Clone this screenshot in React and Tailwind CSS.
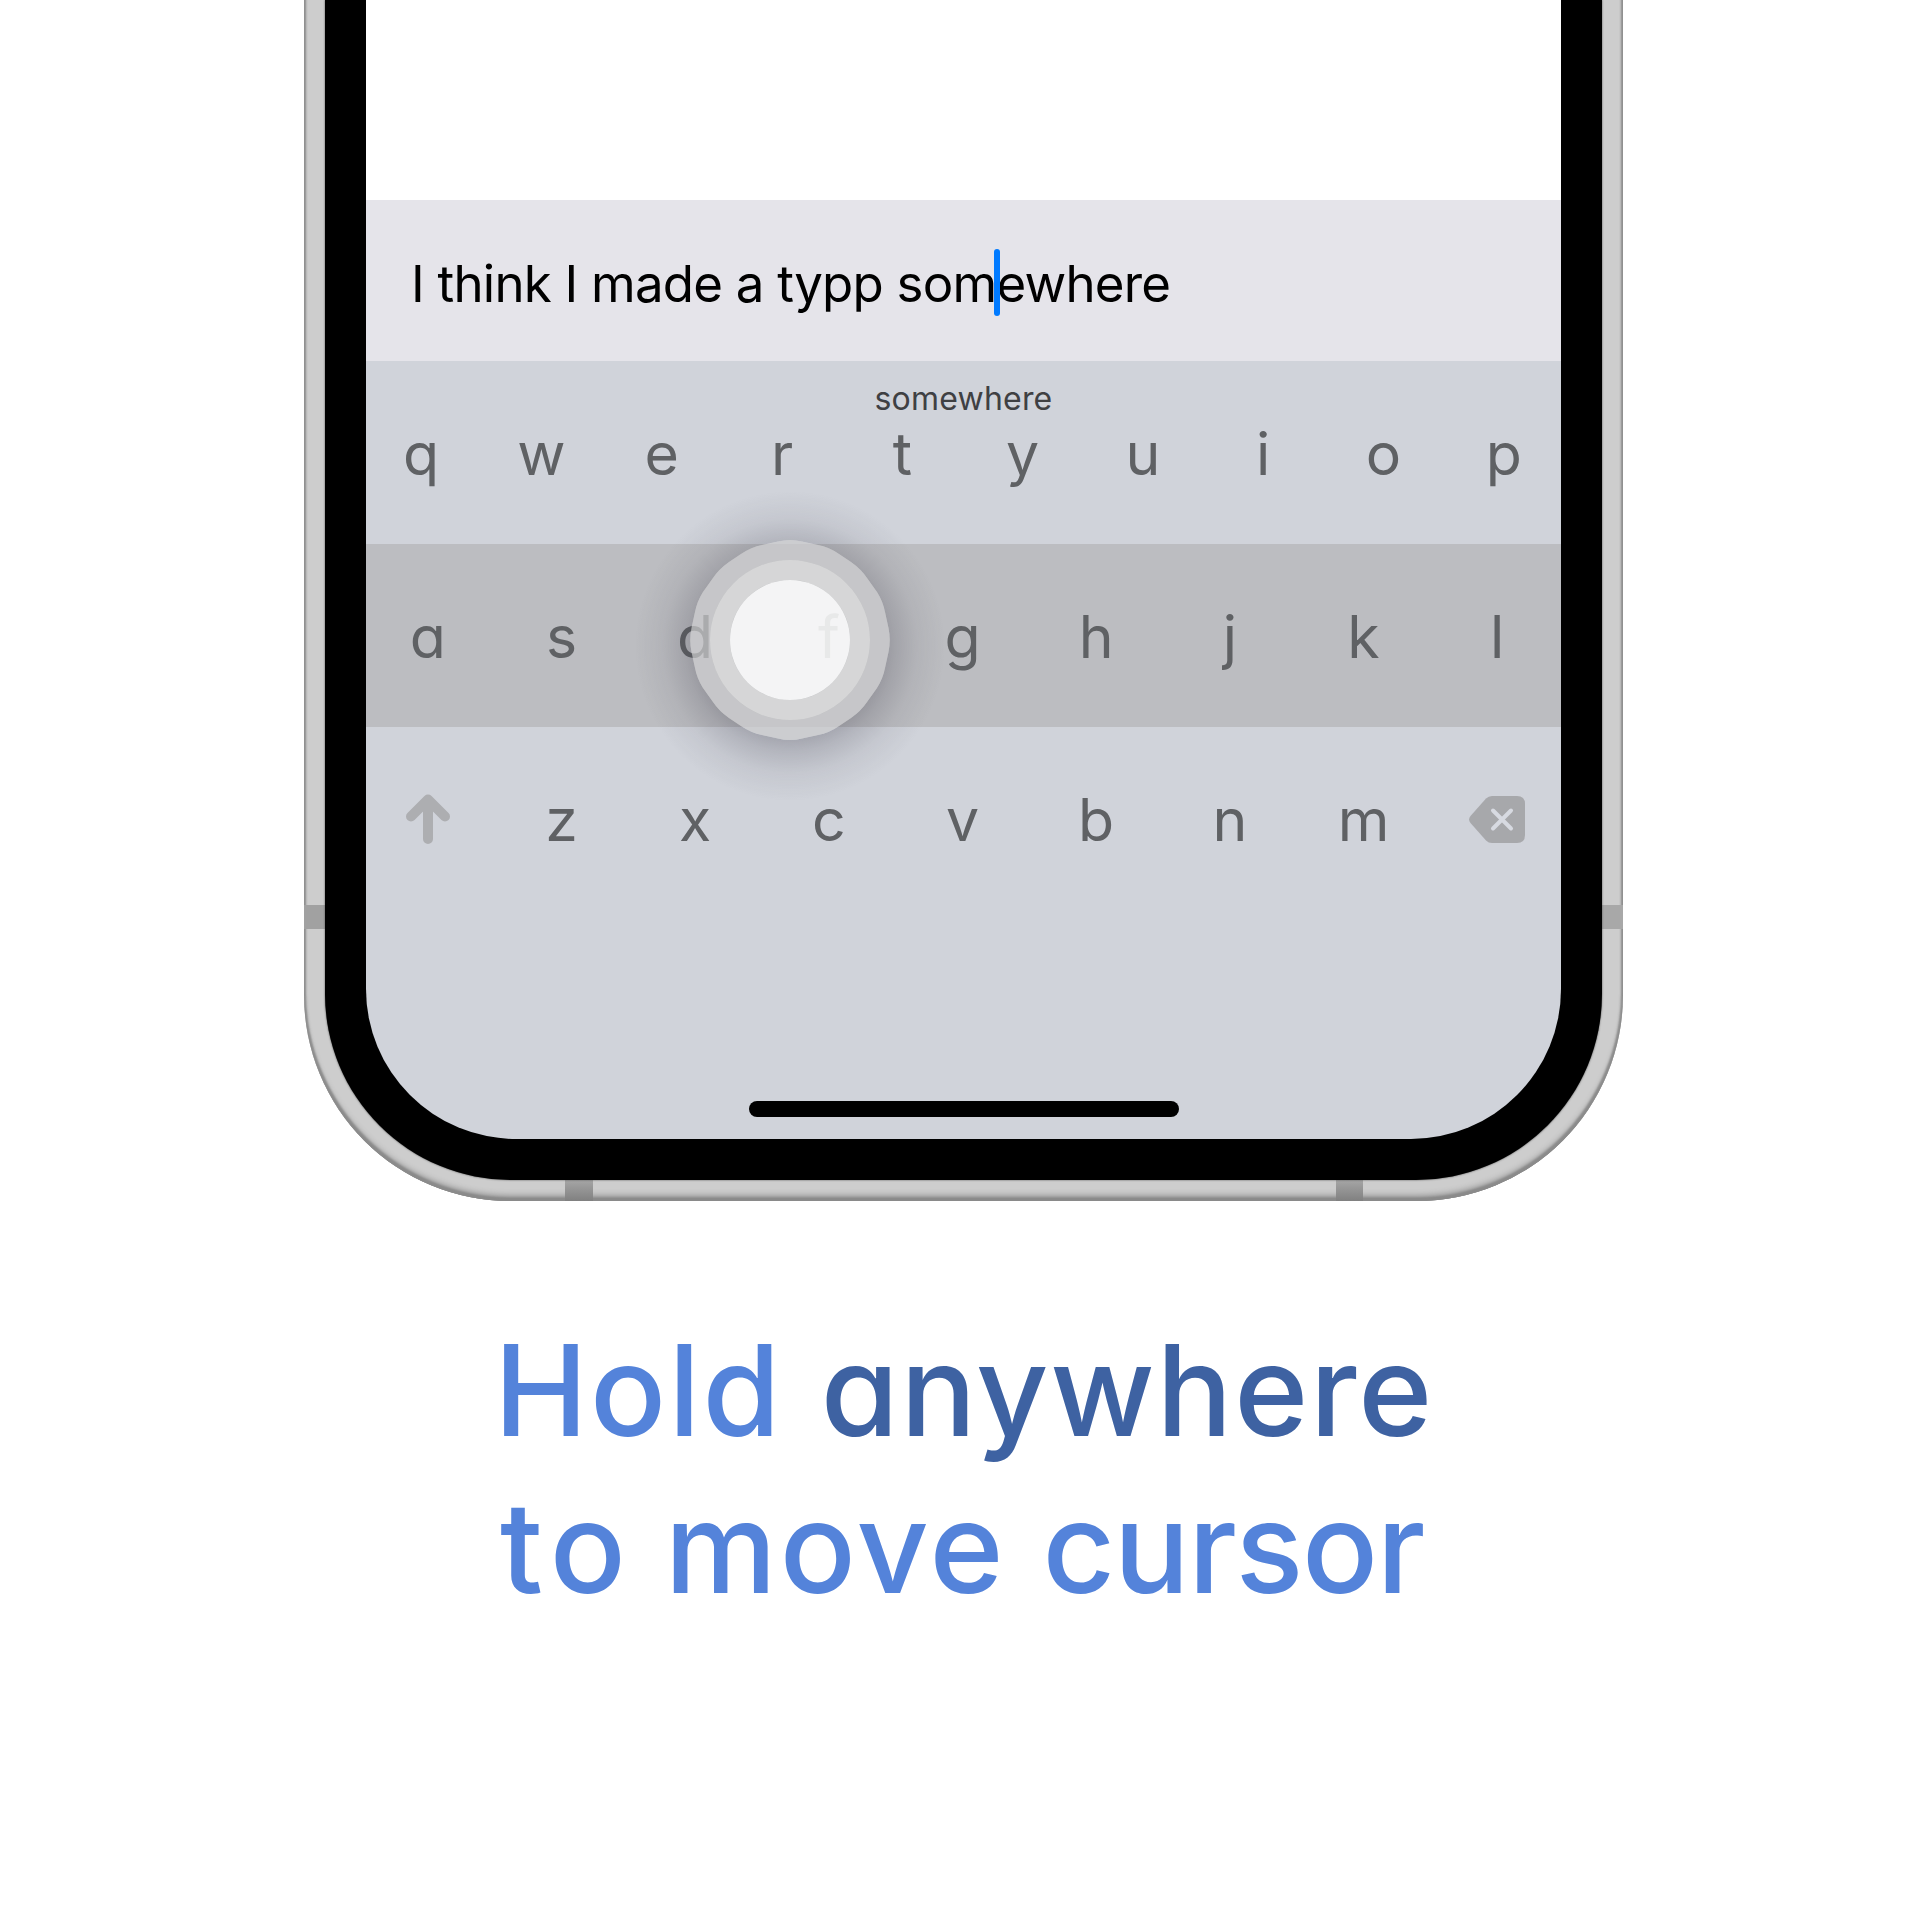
const ROW_TOP = ["q", "w", "e", "r", "t", "y", "u", "i", "o", "p"];
const ROW_HOME = ["a", "s", "d", "f", "g", "h", "j", "k", "l"];
const ROW_BOTTOM = ["z", "x", "c", "v", "b", "n", "m"];
const TOUCH_EDGE =
  "M88 1.500Q100 -1.500 112 1.500L128 5Q139 7 149 14L161 22Q171 29 177 38L187 52Q193 61.500 195 72L198.500 88Q201 100 198.500 112L195 128Q193 138.500 187 148L177 162Q171 171 161 178L149 186Q139 193 128 195L112 198.500Q100 201.500 88 198.500L72 195Q61.500 193 51 186L39 178Q29 171 23 162L13 148Q7 138.500 5 128L1.500 112Q-1 100 1.500 88L5 72Q7 61.500 13 52L23 38Q29 29 39 22L51 14Q61.500 7 72 5Z";

function Key({ children }) {
  return (
    <span className="flex h-full items-center justify-center pt-[2px] text-[59px] leading-none text-[#5f6164]">
      {children}
    </span>
  );
}

function ShiftIcon() {
  return (
    <svg viewBox="0 0 44 50" className="h-[50px] w-[44px]" fill="none" stroke="#adaeb1" strokeWidth="10" strokeLinecap="round" strokeLinejoin="round">
      <path d="M22 45V6M5 22.500L22 5.500L39 22.500" />
    </svg>
  );
}

function BackspaceIcon() {
  return (
    <svg viewBox="0 0 56 47" className="h-[47px] w-[56px]" fill="none">
      <path d="M23 0H48Q56 0 56 8V39Q56 47 48 47H23Q19.500 47 17 44.500L1.500 27Q-1.300 23.500 1.500 20L17 2.500Q19.500 0 23 0Z" fill="#a7a8ab" />
      <path d="M24 14.500L42 32.500M42 14.500L24 32.500" stroke="#d7dae1" strokeWidth="4" strokeLinecap="round" />
    </svg>
  );
}

function TouchPoint() {
  return (
    <div className="absolute left-[324px] top-[540px] size-[200px]">
      <svg viewBox="0 0 200 200" className="size-full overflow-visible">
        <defs>
          <radialGradient id="halo" cx="100" cy="106" r="155" gradientUnits="userSpaceOnUse">
            <stop offset="0.55" stopColor="#3c3a48" stopOpacity="0.34" />
            <stop offset="0.68" stopColor="#3c3a48" stopOpacity="0.19" />
            <stop offset="0.82" stopColor="#3c3a48" stopOpacity="0.07" />
            <stop offset="1" stopColor="#3c3a48" stopOpacity="0" />
          </radialGradient>
          <mask id="outside" maskUnits="userSpaceOnUse" x="-80" y="-80" width="360" height="360">
            <rect x="-80" y="-80" width="360" height="360" fill="#fff" />
            <path d={TOUCH_EDGE} fill="#000" />
          </mask>
        </defs>
        <circle cx="100" cy="106" r="155" fill="url(#halo)" mask="url(#outside)" />
        <path d={TOUCH_EDGE + "M20 100A80 80 0 1 0 180 100A80 80 0 1 0 20 100Z"} fill="#cacbcc" fillOpacity="0.7" fillRule="evenodd" />
        <circle cx="100" cy="100" r="70" fill="none" stroke="#dbdbdb" strokeOpacity="0.85" strokeWidth="20" />
        <circle cx="100" cy="100" r="60" fill="#fcfcfc" fillOpacity="0.88" />
      </svg>
    </div>
  );
}

function InputBar() {
  return (
    <div className="flex h-[161px] items-center bg-[#e5e4ea] pl-[45px] pt-[6px]">
      <p className="whitespace-pre text-[51px] leading-none tracking-[-0.77px] text-black [font-feature-settings:normal]">
        <span>I think I made a typp som</span>
        <span className="relative">
          <span className="absolute -left-[2px] -top-[4px] h-[67px] w-[6px] rounded-full bg-[#007aff]" />
        </span>
        <span>ewhere</span>
      </p>
    </div>
  );
}

function Keyboard() {
  return (
    <div className="relative">
      <div className="absolute inset-x-0 top-[18px] text-center text-[32px] leading-[40px] tracking-[0.2px] text-[#3f4043]">somewhere</div>
      <div className="h-[183px]">
        <div className="-ml-[5px] -mr-[3px] grid h-full grid-cols-10">
          {ROW_TOP.map((k) => <Key key={k}>{k}</Key>)}
        </div>
      </div>
      <div className="h-[183px] bg-[#bcbdc1]">
        <div className="-ml-[5px] -mr-[3px] grid h-full grid-cols-9">
          {ROW_HOME.map((k) => <Key key={k}>{k}</Key>)}
        </div>
      </div>
      <div className="h-[183px]">
        <div className="-ml-[5px] -mr-[3px] grid h-full grid-cols-9">
          <span className="flex items-center justify-center"><ShiftIcon /></span>
          {ROW_BOTTOM.map((k) => <Key key={k}>{k}</Key>)}
          <span className="flex items-center justify-center pt-[1px]"><BackspaceIcon /></span>
        </div>
      </div>
    </div>
  );
}

export default function App() {
  return (
    <main className="flex h-[1920px] w-[1920px] flex-col overflow-hidden bg-white font-['Inter',sans-serif] [font-feature-settings:'cv11']">
      <div className="relative ml-[304px] h-[1201px] w-[1319px] rounded-b-[206px] bg-[#cdcdcd] px-[21px] pb-[21px] shadow-[inset_0_-8px_6px_-3px_#8a8a8a,inset_2px_-3px_2px_#8e8e8e,inset_-2px_-3px_2px_#8e8e8e]">
        <div className="absolute left-0 top-[905px] h-[24px] w-[22px] bg-[#a1a1a1]" />
        <div className="absolute right-0 top-[905px] h-[24px] w-[22px] bg-[#a8a8a8]" />
        <div className="absolute bottom-0 left-[261px] h-[21px] w-[28px] bg-linear-to-b from-[#a6a6a6] to-[#808080]" />
        <div className="absolute bottom-0 left-[1032px] h-[21px] w-[27px] bg-linear-to-b from-[#a6a6a6] to-[#808080]" />
        <div className="relative h-full rounded-b-[186px] bg-black px-[41px] pb-[41px] shadow-[0_0_2px_#444]">
          <div className="h-full overflow-hidden rounded-b-[150px] bg-[#d0d3da]">
            <div className="relative flex h-full flex-col">
              <div className="h-[200px] shrink-0 bg-white" />
              <InputBar />
              <Keyboard />
              <div className="mx-auto mb-[22px] mt-auto h-[16px] w-[430px] rounded-full bg-black" />
              <TouchPoint />
            </div>
          </div>
        </div>
      </div>
      <h1 className="mt-[111px] whitespace-nowrap text-[126px] font-medium leading-[156px] text-[#5483da]">
        <span className="flex pl-[494px]">
          <span className="tracking-[2.3px]">Hold</span>
          <span className="ml-[38px] tracking-[1.8px] text-[#3e62a2]">anywhere</span>
        </span>
        <span className="mt-[1px] flex pl-[500px]">
          <span className="tracking-[8px]">to</span>
          <span className="ml-[31px] tracking-[3px]">move</span>
          <span className="ml-[36px] tracking-[-1.4px]">cursor</span>
        </span>
      </h1>
    </main>
  );
}
